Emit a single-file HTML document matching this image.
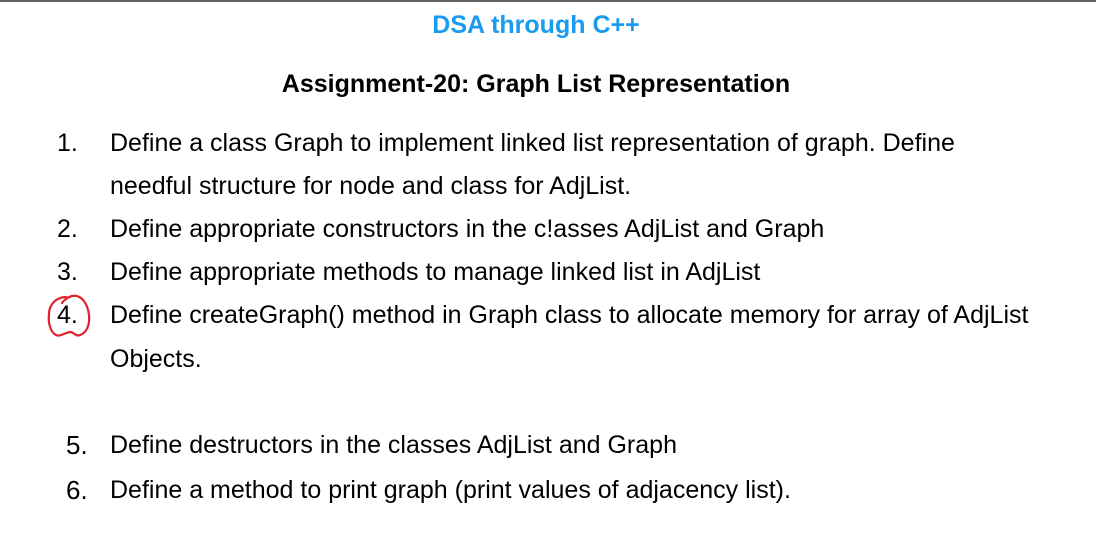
<!DOCTYPE html>
<html><head><meta charset="utf-8"><style>
body{margin:0;width:1096px;height:536px;background:#fff;position:relative;overflow:hidden;font-family:"Liberation Sans",Arial,sans-serif;color:#000}
.bar{position:absolute;left:0;top:0;width:1096px;height:2px;background:#5f6068}
.t{position:absolute;white-space:nowrap;font-size:25px;line-height:26px}
.c{left:-12px;width:1096px;text-align:center;font-weight:bold}
</style></head><body>
<div class="bar"></div>
<div class="t c" style="top:12px;color:#1a9bef">DSA through C++</div>
<div class="t c" style="top:71px">Assignment-20: Graph List Representation</div>
<div class="t" style="left:57px;top:130px">1.</div>
<div class="t" style="left:110px;top:130px">Define a class Graph to implement linked list representation of graph. Define</div>
<div class="t" style="left:110px;top:173px">needful structure for node and class for AdjList.</div>
<div class="t" style="left:57px;top:216px">2.</div>
<div class="t" style="left:110px;top:216px">Define appropriate constructors in the c!asses AdjList and Graph</div>
<div class="t" style="left:57px;top:259px">3.</div>
<div class="t" style="left:110px;top:259px">Define appropriate methods to manage linked list in AdjList</div>
<div class="t" style="left:57px;top:302px">4.</div>
<div class="t" style="left:110px;top:302px">Define createGraph() method in Graph class to allocate memory for array of AdjList</div>
<div class="t" style="left:110px;top:346px">Objects.</div>
<div class="t" style="left:66px;top:432px;font-size:26px">5.</div>
<div class="t" style="left:110px;top:432px">Define destructors in the classes AdjList and Graph</div>
<div class="t" style="left:66px;top:477px;font-size:26px">6.</div>
<div class="t" style="left:110px;top:477px">Define a method to print graph (print values of adjacency list).</div>
<svg style="position:absolute;left:0;top:0" width="1096" height="536"><path d="M66 297 C56 297 49 305 49 314 C48 322 50 332 56 335 C60 337 64 333 70 332 C74 332 76 337 80 335 C87 333 90 324 89 315 C88 305 82 294 72 296 C68 297 64 300 62 303" fill="none" stroke="#e0202e" stroke-width="2.2" stroke-linecap="round"/></svg>
</body></html>
